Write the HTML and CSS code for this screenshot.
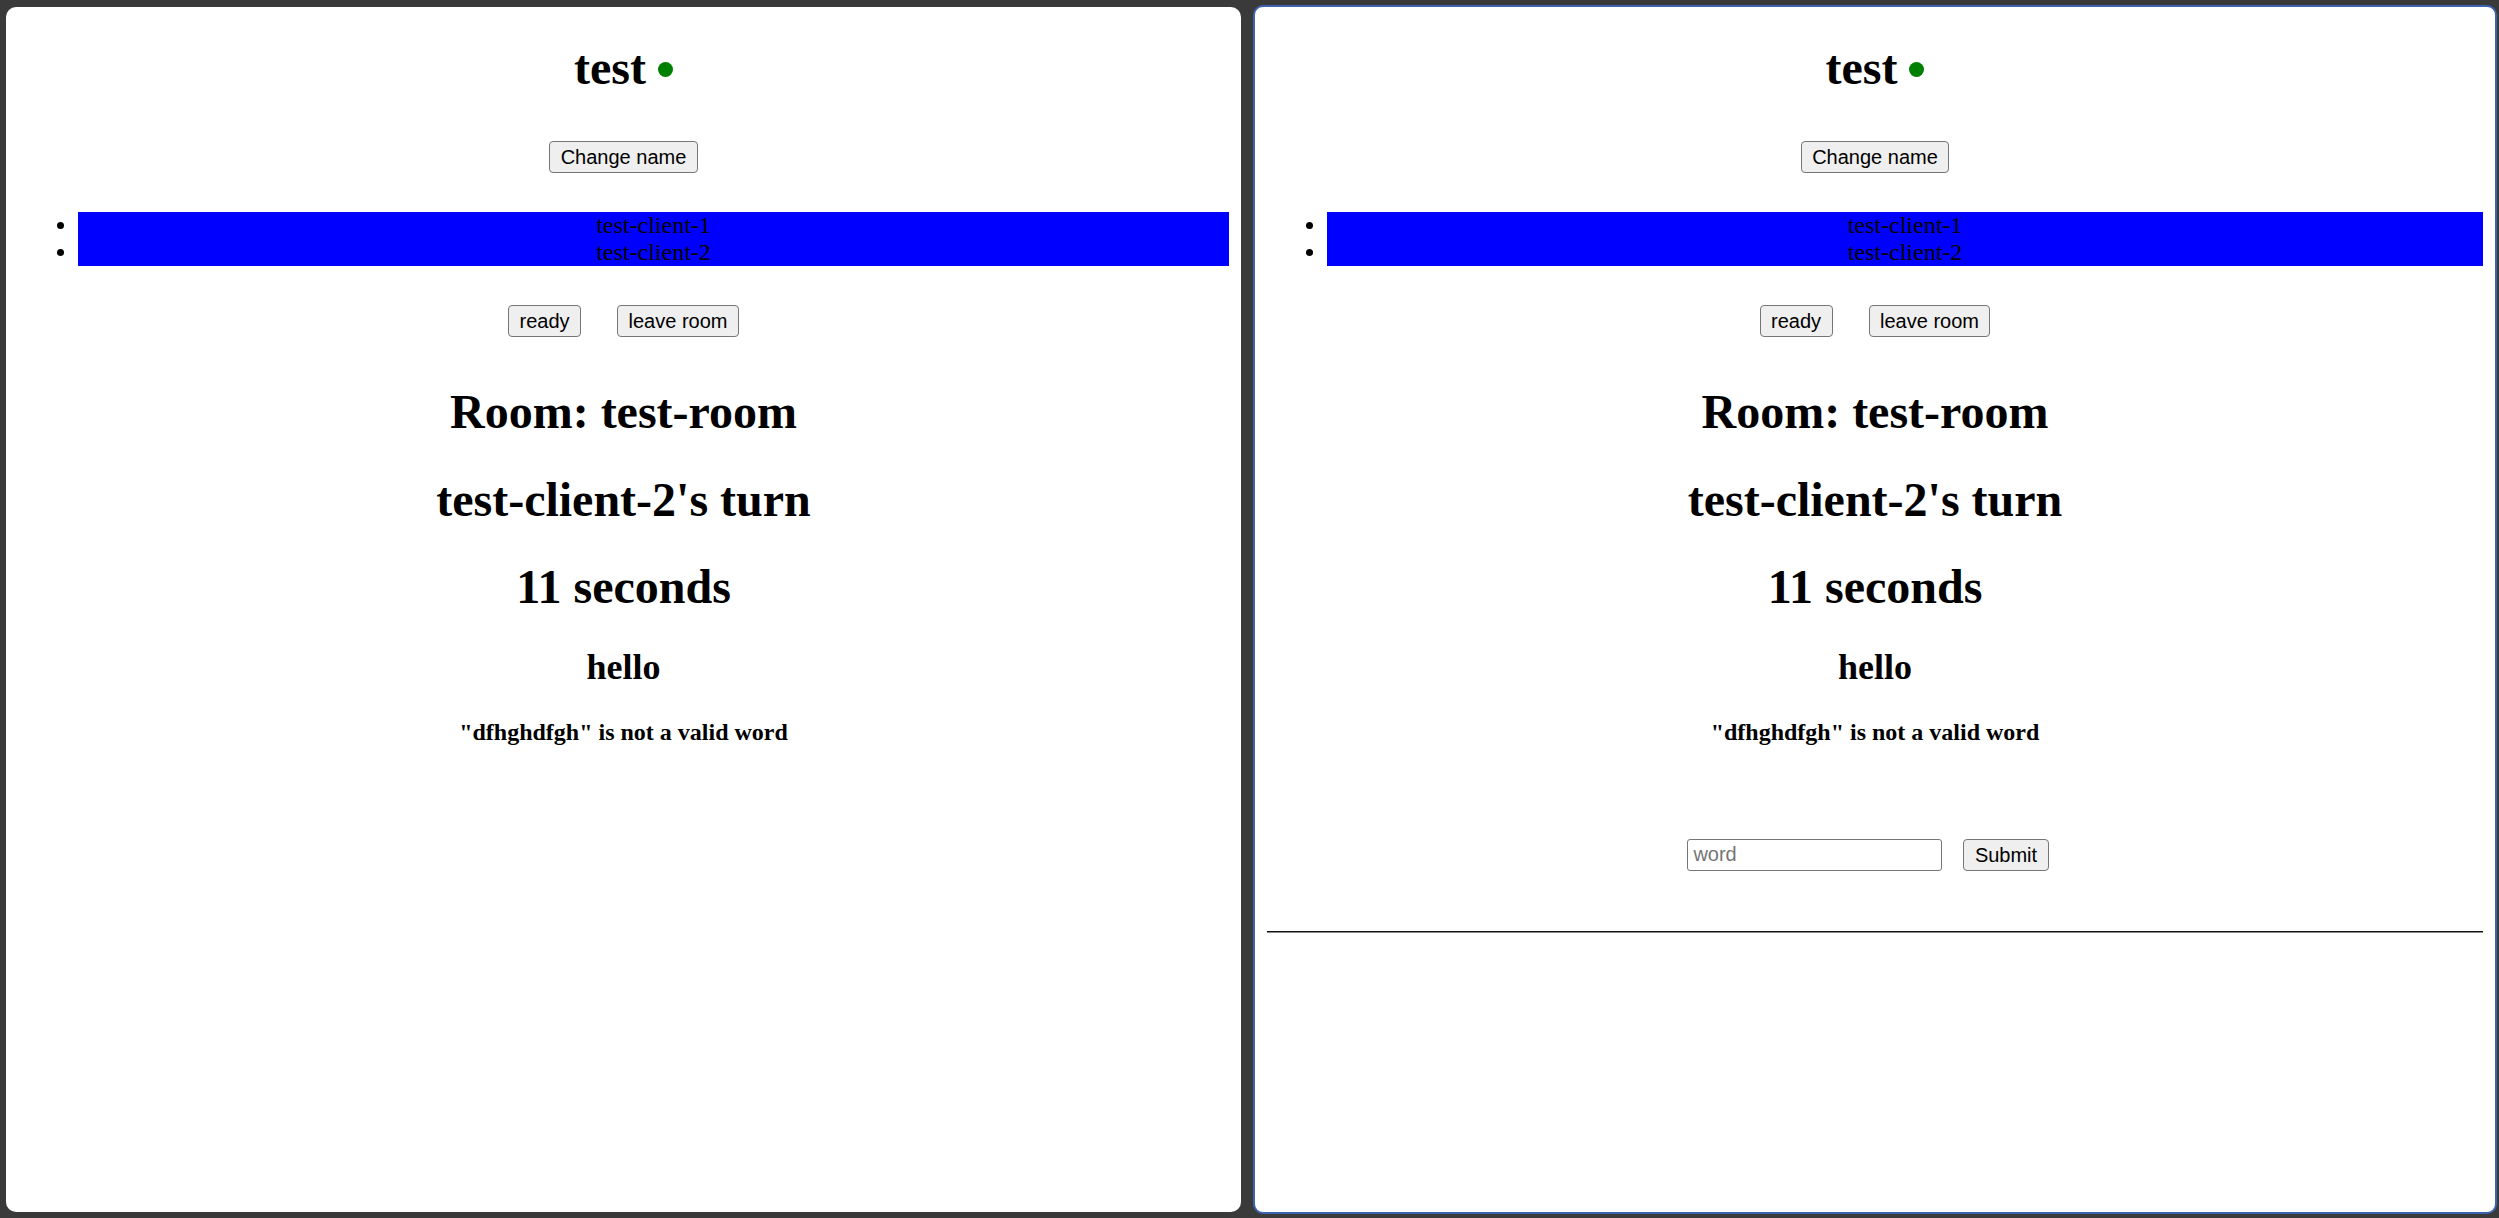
FILE: index.html
```html
<!DOCTYPE html>
<html lang="en">
<head>
<meta charset="utf-8">
<title>Word game</title>
<link rel="stylesheet" href="styles.css">
</head>
<body>
<div class="desktop">
  <section class="window window-left">
    <h1 class="title">test <span class="dot"></span></h1>
    <div class="row name-row"><button type="button">Change name</button></div>
    <ul class="players">
      <li>test-client-1</li>
      <li>test-client-2</li>
    </ul>
    <div class="row actions"><button type="button">ready</button><button type="button">leave room</button></div>
    <h1 class="big room">Room: test-room</h1>
    <h1 class="big turn">test-client-2's turn</h1>
    <h1 class="big timer">11 seconds</h1>
    <h2 class="word">hello</h2>
    <h4 class="error">"dfhghdfgh" is not a valid word</h4>
  </section>
  <section class="window window-right">
    <h1 class="title">test <span class="dot"></span></h1>
    <div class="row name-row"><button type="button">Change name</button></div>
    <ul class="players">
      <li>test-client-1</li>
      <li>test-client-2</li>
    </ul>
    <div class="row actions"><button type="button">ready</button><button type="button">leave room</button></div>
    <h1 class="big room">Room: test-room</h1>
    <h1 class="big turn">test-client-2's turn</h1>
    <h1 class="big timer">11 seconds</h1>
    <h2 class="word">hello</h2>
    <h4 class="error">"dfhghdfgh" is not a valid word</h4>
    <form class="row entry"><input type="text" placeholder="word"><button type="button">Submit</button></form>
    <hr class="rule">
  </section>
</div>
</body>
</html>
```
FILE: styles.css
```css
* { box-sizing: border-box; }
html, body { margin: 0; height: 100%; }
body {
  background: #3a3a3a;
  font-family: "Liberation Serif", "Times New Roman", serif;
  color: #000;
  overflow: hidden;
}
.desktop {
  display: flex;
  align-items: flex-start;
  gap: 12px;
  padding-left: 6px;
}
.window {
  background: #fff;
  border-radius: 10px;
  padding: 0 12px;
  display: flow-root;
  text-align: center;
}
.window-left {
  width: 1235px;
  height: 1205px;
  margin-top: 7px;
}
.window-right {
  width: 1244px;
  height: 1209px;
  margin-top: 5px;
  border: 2px solid #3d62b0;
}
h1, h2, h4 { margin: 0; font-weight: bold; }
.title {
  font-size: 48px;
  line-height: 56px;
  margin-top: 33px;
}
.dot {
  display: inline-block;
  width: 15px;
  height: 15px;
  border-radius: 50%;
  background: #008000;
  vertical-align: 7px;
}
.row {
  display: flex;
  justify-content: center;
  align-items: center;
}
.name-row { margin-top: 45px; }
button {
  font-family: "Liberation Sans", Arial, sans-serif;
  font-size: 20px;
  line-height: 1;
  height: 32px;
  padding: 0 10.5px;
  border: 1px solid #767676;
  border-radius: 4px;
  background: #efefef;
  color: #000;
  margin: 0;
}
.players {
  margin: 39px 0 0;
  padding-left: 60px;
  font-size: 24px;
  line-height: 27px;
  list-style: disc;
}
.players li {
  background: #0000ff;
  text-align: center;
}
.actions {
  margin-top: 39px;
  gap: 36px;
}
.big {
  font-size: 48px;
  line-height: 56px;
}
.room { margin-top: 47px; }
.turn { margin-top: 31.5px; }
.timer { margin-top: 31.5px; }
.word {
  font-size: 36px;
  line-height: 41px;
  margin-top: 31.5px;
}
.error {
  font-size: 24px;
  line-height: 28px;
  margin-top: 30px;
}
.entry {
  margin: 93px 0 0;
  gap: 21px;
  padding-right: 14px;
}
.entry input {
  width: 255px;
  height: 32px;
  font-family: "Liberation Sans", Arial, sans-serif;
  font-size: 20px;
  padding: 0 5px;
  border: 1px solid #767676;
  border-radius: 3px;
  color: #000;
  background: #fff;
  margin: 0;
}
.entry input::placeholder { color: #757575; }
.rule {
  margin: 60px 0 0;
  height: 0;
  border: 0;
  border-top: 1px solid #111;
  border-bottom: 1px solid #8a8a8a;
}
```
